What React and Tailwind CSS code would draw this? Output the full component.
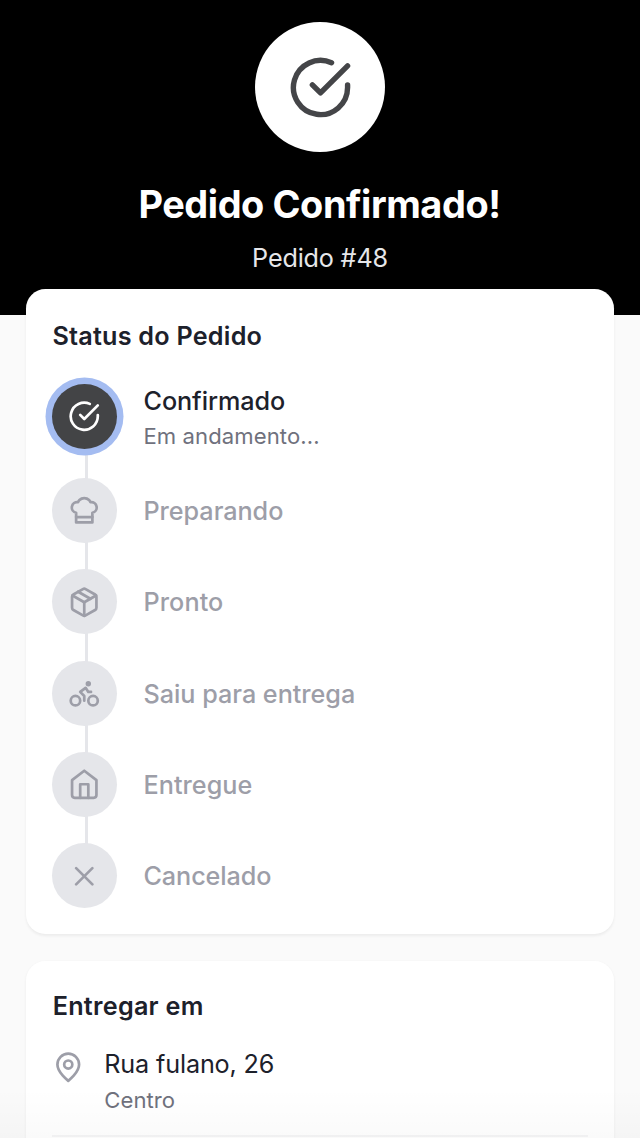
function Icon({ className, children }) {
  return (
    <svg
      viewBox="0 0 24 24"
      fill="none"
      stroke="currentColor"
      strokeWidth="2"
      strokeLinecap="round"
      strokeLinejoin="round"
      className={className}
    >
      {children}
    </svg>
  );
}

const glyphs = {
  check: (
    <>
      <path d="M22 11.08V12a10 10 0 1 1-5.93-9.14" />
      <path d="m9 11 3 3L22 4" />
    </>
  ),
  chef: (
    <>
      <path d="M6 13.87A4 4 0 0 1 7.41 6a5.11 5.11 0 0 1 1.05-1.54 5 5 0 0 1 7.08 0A5.11 5.11 0 0 1 16.59 6 4 4 0 0 1 18 13.87V21H6Z" />
      <path d="M6 17h12" />
    </>
  ),
  box: (
    <>
      <path d="m7.5 4.27 9 5.15" />
      <path d="M21 8a2 2 0 0 0-1-1.73l-7-4a2 2 0 0 0-2 0l-7 4A2 2 0 0 0 3 8v8a2 2 0 0 0 1 1.73l7 4a2 2 0 0 0 2 0l7-4A2 2 0 0 0 21 16Z" />
      <path d="m3.3 7 8.7 5 8.7-5" />
      <path d="M12 22V12" />
    </>
  ),
  bike: (
    <>
      <circle cx="18.5" cy="17.5" r="3.5" />
      <circle cx="5.5" cy="17.5" r="3.5" />
      <circle cx="15" cy="5" r="1" />
      <path d="M12 17.5V14l-3-3 4-3 2 3h2" />
    </>
  ),
  home: (
    <>
      <path d="m3 9 9-7 9 7v11a2 2 0 0 1-2 2H5a2 2 0 0 1-2-2z" />
      <path d="M9 22V12h6v10" />
    </>
  ),
  close: (
    <>
      <path d="M18 6 6 18" />
      <path d="m6 6 12 12" />
    </>
  ),
  pin: (
    <>
      <path d="M20 10c0 6-8 12-8 12s-8-6-8-12a8 8 0 0 1 16 0Z" />
      <circle cx="12" cy="10" r="3" />
    </>
  ),
};

const steps = [
  { label: "Confirmado", icon: "check", note: "Em andamento...", active: true, tracking: "tracking-[-0.08px]" },
  { label: "Preparando", icon: "chef", tracking: "tracking-[-0.04px]" },
  { label: "Pronto", icon: "box", tracking: "tracking-[0.1px]" },
  { label: "Saiu para entrega", icon: "bike", tracking: "tracking-[-0.02px]" },
  { label: "Entregue", icon: "home", tracking: "tracking-[0.04px]" },
  { label: "Cancelado", icon: "close", tracking: "tracking-[-0.1px]" },
];

function Step({ step, last }) {
  return (
    <li className="relative flex items-center gap-[26.5px]">
      {!last && (
        <span
          className={
            step.active
              ? "absolute left-[32.5px] top-[36px] h-[94px] w-[3.25px] bg-[#e5e6ea]"
              : "absolute left-[32.5px] top-[33px] h-[91px] w-[3.25px] bg-[#e5e6ea]"
          }
        />
      )}
      <span
        className={
          step.active
            ? "relative z-10 flex size-[65px] shrink-0 items-center justify-center rounded-full bg-[#434446] text-white ring-[6.5px] ring-[#a4bcf1]"
            : "relative z-10 flex size-[65px] shrink-0 items-center justify-center rounded-full bg-[#e5e6ea] text-[#9d9ea8]"
        }
      >
        <Icon className="size-[32.5px]">{glyphs[step.icon]}</Icon>
      </span>
      <div className={step.active ? "pt-[1.4px]" : "pt-[2px]"}>
        <p
          className={`text-[25.2px] font-medium leading-[39px] ${step.tracking} ${
            step.active ? "text-[#1d212b]" : "text-[#9d9ea8]"
          }`}
        >
          {step.label}
        </p>
        {step.note && (
          <p className="-mt-[0.6px] -mb-[0.8px] text-[22.1px] leading-[32.5px] tracking-[0.08px] text-[#6f717d]">
            {step.note}
          </p>
        )}
      </div>
    </li>
  );
}

export default function App() {
  return (
    <div className="relative h-[1138px] w-[640px] overflow-hidden bg-[#fafafa] font-['Inter',sans-serif]">
      <header className="flex h-[315.2px] flex-col items-center bg-black pt-[22.2px]">
        <div className="flex size-[130px] items-center justify-center rounded-full bg-white pl-px text-[#444548]">
          <Icon className="size-[65px]">{glyphs.check}</Icon>
        </div>
        <h1 className="mt-[26px] pr-px text-[37.9px] font-bold leading-[52px] tracking-[-0.42px] text-white">
          Pedido Confirmado!
        </h1>
        <p className="mt-[9px] text-[25.2px] leading-[39px] tracking-[-0.18px] text-[#e6e7ea]">Pedido #48</p>
      </header>
      <main className="relative -mt-[26px] flex flex-col gap-[26.6px] px-[26px]">
        <section className="rounded-[19.5px] bg-white px-[26px] pb-[26px] pt-[27.6px] shadow-[0_1.6px_3px_rgba(0,0,0,0.06)]">
          <h2 className="mb-[24.5px] pl-[0.4px] text-[25.2px] font-semibold leading-[39px] tracking-[0.23px] text-[#1d212b]">
            Status do Pedido
          </h2>
          <ul className="flex flex-col gap-[26.3px]">
            {steps.map((step, i) => (
              <Step key={step.label} step={step} last={i === steps.length - 1} />
            ))}
          </ul>
        </section>
        <section className="h-[240px] rounded-[19.5px] bg-white px-[26.3px] py-[26px] shadow-[0_1.6px_3px_rgba(0,0,0,0.06)]">
          <h2 className="mb-[19.3px] pl-[0.4px] text-[25.2px] font-semibold leading-[39px] tracking-[0.26px] text-[#1d212b]">
            Entregar em
          </h2>
          <div className="flex gap-[19.5px] border-b-2 border-[#f5f5f6] pb-[18.5px]">
            <Icon className="mt-[6px] size-[32.5px] shrink-0 text-[#9d9ea8]">{glyphs.pin}</Icon>
            <div>
              <p className="text-[25.2px] leading-[39px] tracking-[-0.15px] text-[#1d212b]">Rua fulano, 26</p>
              <p className="-mt-[0.4px] text-[22.1px] leading-[32.5px] tracking-[0.05px] text-[#6f717d]">Centro</p>
            </div>
          </div>
        </section>
      </main>
      <div className="absolute inset-x-0 bottom-0 h-[50px] bg-linear-to-b from-black/0 to-black/[0.02]" />
    </div>
  );
}
